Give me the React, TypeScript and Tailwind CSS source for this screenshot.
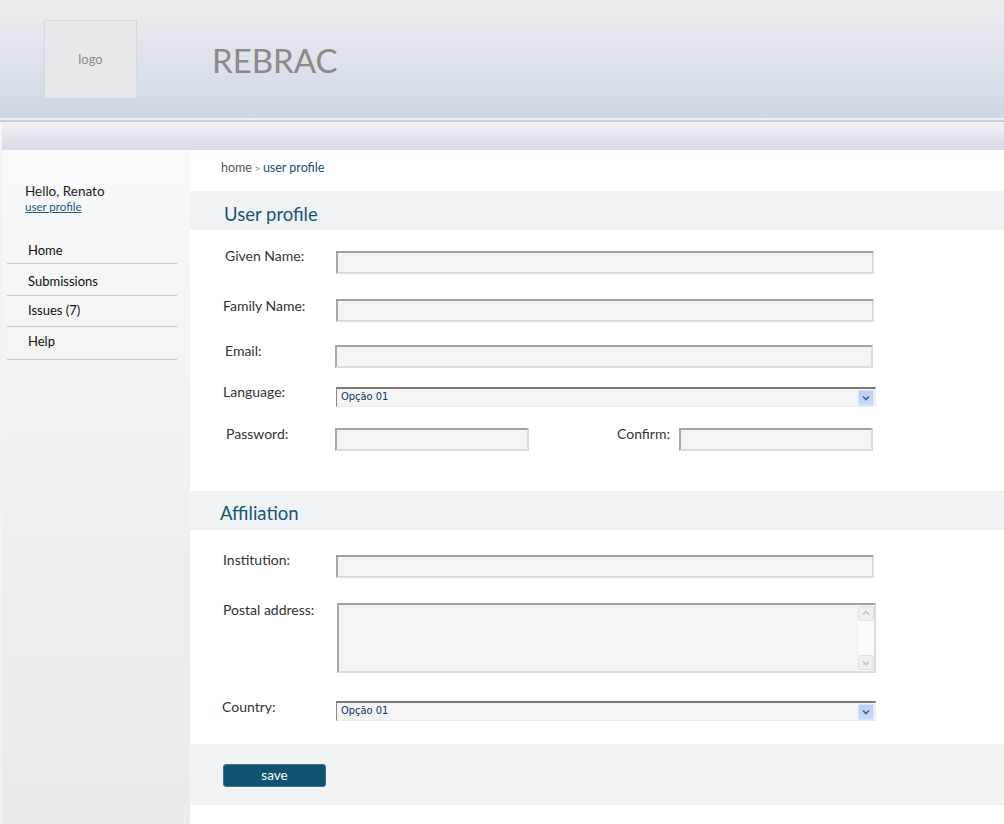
import React from "react";

const font = { fontFamily: "Lato, 'Open Sans', sans-serif" };

function TextInput({ className = "" }: { className?: string }) {
  return (
    <input
      type="text"
      className={
        "h-[23px] bg-[#f4f4f4] border-2 border-t-[#a2a2a2] border-l-[#a9a9a9] border-r-[#dcdcdc] border-b-[#dcdcdc] outline-none " +
        className
      }
    />
  );
}

function Chevron({ color = "#4a5d80" }: { color?: string }) {
  return (
    <svg width="8" height="6" viewBox="0 0 8 6">
      <path d="M1 1.5 L4 4.5 L7 1.5" fill="none" stroke={color} strokeWidth="1.6" />
    </svg>
  );
}

function Select() {
  return (
    <div className="h-[20px] w-[540px] flex items-center justify-between bg-[#f4f4f4] border border-t-2 border-t-[#7d7b70] border-l-[#8d8b80] border-r-[#ecece4] border-b-[#ecece4]">
      <span
        className="pl-1 text-[11px] text-[#15306a]"
        style={{ fontFamily: "'DejaVu Sans Condensed', 'Liberation Sans', sans-serif" }}
      >
        Opção 01
      </span>
      <div className="mr-[1px] w-[16px] h-[16px] rounded-[2px] bg-gradient-to-b from-[#b9cdfa] to-[#cbd9fb] border border-[#d7e2fb] flex items-center justify-center">
        <Chevron />
      </div>
    </div>
  );
}

function Label({ children, className = "" }: { children: React.ReactNode; className?: string }) {
  return <div className={"text-[14px] leading-4 text-[#333] " + className}>{children}</div>;
}

const menu = [
  { label: "Home", cls: "pt-0 pb-[5px]" },
  { label: "Submissions", cls: "pt-[9px] pb-[6px]" },
  { label: "Issues (7)", cls: "pt-[6px] pb-[8px]" },
  { label: "Help", cls: "pt-[6px] pb-[10px]" },
];

export default function App() {
  return (
    <div className="w-[1004px] h-[824px] bg-white overflow-hidden flex flex-col" style={font}>
      {/* header */}
      <div className="h-[118px] shrink-0 bg-gradient-to-b from-[#e9eef1] via-[#dee3ec] to-[#cdd7e0] flex items-start">
        <div className="ml-[44px] mt-[20px] w-[93px] h-[79px] bg-[#e6e8eb] border border-[#d6d9dd] flex items-center justify-center text-[13px] text-[#8a8a8a]">
          logo
        </div>
        <div className="ml-[75px] mt-[40px] text-[33px] leading-[40px] text-[#8a8a8a]">
          REBRAC
        </div>
      </div>
      <div className="h-[2px] shrink-0 bg-[#eef1f4]" />
      <div className="h-[2px] shrink-0 bg-[#c6ced6]" />
      <div className="h-[28px] shrink-0 border-l-2 border-l-[#f4f5f7] bg-gradient-to-b from-[#f1f2f6] to-[#d7dbe4]" />

      <div className="flex flex-1">
        {/* sidebar */}
        <div className="w-[190px] shrink-0 border-l-2 border-l-[#f1f2f5] bg-gradient-to-b from-[#f8f9fa] via-[#eef0f3] to-[#e9eaee]">
          <div className="pl-[23px] pt-[33px]">
            <div className="text-[13.5px] leading-4 text-[#1e1e1e]">Hello, Renato</div>
            <a href="#" className="block mt-[1px] text-[11.5px] leading-[13px] text-[#1f5a7e] underline">
              user profile
            </a>
          </div>
          <div className="mt-[29px] ml-[5px] w-[170px]">
            {menu.map((m) => (
              <div
                key={m.label}
                className={"pl-[21px] text-[13px] leading-4 text-[#111] border-b border-[#c6c8cc] " + m.cls}
              >
                {m.label}
              </div>
            ))}
          </div>
        </div>

        {/* main */}
        <div className="flex-1 flex flex-col">
          <div className="pl-[31px] pt-[10px] h-[41px] text-[12.5px] leading-[16px]">
            <span className="text-[#555]">home</span>
            <span className="text-[#777] text-[10px]"> &gt; </span>
            <span className="text-[#1b4f6e]">user profile</span>
          </div>
          <div className="h-[39px] bg-[#f0f3f6] pl-[34px] pt-[11px] text-[18.5px] leading-[24px] text-[#1b5575]">
            User profile
          </div>

          <div className="pl-[33px]">
            <div className="flex items-start mt-[21px]">
              <Label className="w-[113px] pl-[2px] -mt-[3px]">Given Name:</Label>
              <TextInput className="w-[538px]" />
            </div>
            <div className="flex items-start mt-[25px]">
              <Label className="w-[113px] -mt-[1px]">Family Name:</Label>
              <TextInput className="w-[538px]" />
            </div>
            <div className="flex items-start mt-[23px]">
              <Label className="w-[112px] pl-[2px] -mt-[2px]">Email:</Label>
              <TextInput className="w-[538px]" />
            </div>
            <div className="flex items-start mt-[19px]">
              <Label className="w-[113px] -mt-[3px]">Language:</Label>
              <Select />
            </div>
            <div className="flex items-start mt-[21px]">
              <Label className="w-[112px] pl-[3px] -mt-[2px]">Password:</Label>
              <TextInput className="w-[194px]" />
              <Label className="ml-[88px] w-[62px] -mt-[2px]">Confirm:</Label>
              <TextInput className="w-[194px]" />
            </div>
          </div>

          <div className="mt-[40px] h-[39px] bg-[#f0f3f6] pl-[30px] pt-[10px] text-[18.5px] leading-[24px] text-[#1b5575]">
            Affiliation
          </div>

          <div className="pl-[33px]">
            <div className="flex items-start mt-[25px]">
              <Label className="w-[113px] -mt-[3px]">Institution:</Label>
              <TextInput className="w-[538px]" />
            </div>
            <div className="flex items-start mt-[25px]">
              <Label className="w-[114px] -mt-[1px]">Postal address:</Label>
              <div className="w-[539px] h-[70px] flex bg-[#f4f4f4] border-2 border-t-[#a2a2a2] border-l-[#a9a9a9] border-r-[#dcdcdc] border-b-[#dcdcdc]">
                <div className="flex-1" />
                <div className="w-[16px] bg-[#fbfbf7] flex flex-col justify-between py-[1px]">
                  <div className="h-[15px] rounded-[2px] bg-[#f0f0ea] border border-[#e2e2dc] flex items-center justify-center rotate-180">
                    <Chevron color="#c4c4c0" />
                  </div>
                  <div className="h-[15px] rounded-[2px] bg-[#f0f0ea] border border-[#e2e2dc] flex items-center justify-center">
                    <Chevron color="#c4c4c0" />
                  </div>
                </div>
              </div>
            </div>
            <div className="flex items-start mt-[28px]">
              <Label className="w-[114px] -ml-[1px] -mt-[2px]">Country:</Label>
              <Select />
            </div>
          </div>

          <div className="mt-[23px] h-[61px] bg-[#f2f3f5] pl-[33px] pt-[18px]">
            <button className="w-[103px] h-[23px] rounded-[3px] bg-[#0f5272] border border-[#3b7290] text-white text-[13.5px] leading-4">
              save
            </button>
          </div>
        </div>
      </div>
    </div>
  );
}
